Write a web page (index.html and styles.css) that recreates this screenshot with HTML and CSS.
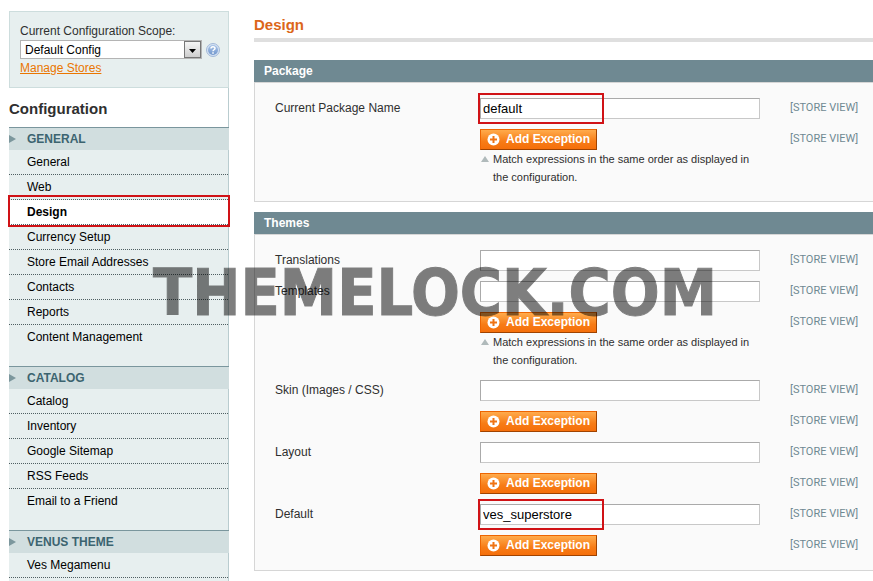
FILE: index.html
```html
<!DOCTYPE html>
<html lang="en">
<head>
<meta charset="utf-8">
<title>Configuration - Design</title>
<link rel="stylesheet" href="styles.css">
</head>
<body>
<svg class="defs" aria-hidden="true">
  <symbol id="plus" viewBox="0 0 13 13">
    <circle cx="6.5" cy="6.5" r="6" fill="#fff"/>
    <path d="M6.5 3v7M3 6.500h7" stroke="#ef7414" stroke-width="2"/>
  </symbol>
</svg>
<div class="page">
  <aside class="sidebar">
    <div class="scope-box">
      <label for="scope">Current Configuration Scope:</label>
      <div class="scope-row">
        <span class="select-wrap">
          <select id="scope"><option>Default Config</option></select>
          <svg class="select-arrow" viewBox="0 0 17 17" aria-hidden="true">
            <defs><linearGradient id="arrow-bg" x2="0" y2="1"><stop stop-color="#f6f6f6"/><stop offset="1" stop-color="#cdcdcd"/></linearGradient></defs>
            <rect x=".5" y=".5" width="16" height="16" fill="url(#arrow-bg)" stroke="#777"/>
            <path d="M5 8h7l-3.500 4z" fill="#000"/>
          </svg>
        </span>
        <svg class="help" viewBox="0 0 14 14" role="img" aria-label="Help">
          <defs><linearGradient id="help-bg" x2="0" y2="1"><stop stop-color="#a9c4e8"/><stop offset="1" stop-color="#7398cd"/></linearGradient></defs>
          <circle cx="7" cy="7" r="6.500" fill="#d5e2f2" stroke="#a3b9d8"/>
          <circle cx="7" cy="7" r="5" fill="url(#help-bg)"/>
          <path d="M5 5.600C5 3.200 9 3.200 9 5.400C9 6.800 7 6.700 7 8.300M7 9.300v1.500" fill="none" stroke="#fff" stroke-width="1.500"/>
        </svg>
      </div>
      <a href="#">Manage Stores</a>
    </div>
    <h2>Configuration</h2>
    <nav>
      <section>
        <h3>GENERAL</h3>
        <ul>
          <li><a href="#">General</a></li>
          <li><a href="#">Web</a></li>
          <li class="active"><a href="#">Design</a></li>
          <li><a href="#">Currency Setup</a></li>
          <li><a href="#">Store Email Addresses</a></li>
          <li><a href="#">Contacts</a></li>
          <li><a href="#">Reports</a></li>
          <li><a href="#">Content Management</a></li>
        </ul>
      </section>
      <section>
        <h3>CATALOG</h3>
        <ul>
          <li><a href="#">Catalog</a></li>
          <li><a href="#">Inventory</a></li>
          <li><a href="#">Google Sitemap</a></li>
          <li><a href="#">RSS Feeds</a></li>
          <li><a href="#">Email to a Friend</a></li>
        </ul>
      </section>
      <section class="cut">
        <h3>VENUS THEME</h3>
        <ul>
          <li><a href="#">Ves Megamenu</a></li>
        </ul>
      </section>
    </nav>
  </aside>
  <main>
    <h1>Design</h1>
    <section class="panel">
      <h2>Package</h2>
      <div class="fields">
        <div class="row">
          <label for="package">Current Package Name</label>
          <div class="control marked"><input id="package" type="text" value="default"></div>
          <span class="level">[STORE VIEW]</span>
        </div>
        <div class="row">
          <div class="control">
            <button type="button"><svg aria-hidden="true"><use href="#plus"/></svg>Add Exception</button>
            <p class="hint">Match expressions in the same order as displayed in the configuration.</p>
          </div>
          <span class="level">[STORE VIEW]</span>
        </div>
      </div>
    </section>
    <section class="panel">
      <h2>Themes</h2>
      <div class="fields">
        <div class="row">
          <label for="translations">Translations</label>
          <div class="control"><input id="translations" type="text"></div>
          <span class="level">[STORE VIEW]</span>
        </div>
        <div class="row">
          <label for="templates">Templates</label>
          <div class="control"><input id="templates" type="text"></div>
          <span class="level">[STORE VIEW]</span>
        </div>
        <div class="row">
          <div class="control">
            <button type="button"><svg aria-hidden="true"><use href="#plus"/></svg>Add Exception</button>
            <p class="hint">Match expressions in the same order as displayed in the configuration.</p>
          </div>
          <span class="level">[STORE VIEW]</span>
        </div>
        <div class="row">
          <label for="skin">Skin (Images / CSS)</label>
          <div class="control"><input id="skin" type="text"></div>
          <span class="level">[STORE VIEW]</span>
        </div>
        <div class="row">
          <div class="control"><button type="button"><svg aria-hidden="true"><use href="#plus"/></svg>Add Exception</button></div>
          <span class="level">[STORE VIEW]</span>
        </div>
        <div class="row">
          <label for="layout">Layout</label>
          <div class="control"><input id="layout" type="text"></div>
          <span class="level">[STORE VIEW]</span>
        </div>
        <div class="row">
          <div class="control"><button type="button"><svg aria-hidden="true"><use href="#plus"/></svg>Add Exception</button></div>
          <span class="level">[STORE VIEW]</span>
        </div>
        <div class="row">
          <label for="default">Default</label>
          <div class="control marked"><input id="default" type="text" value="ves_superstore"></div>
          <span class="level">[STORE VIEW]</span>
        </div>
        <div class="row">
          <div class="control"><button type="button"><svg aria-hidden="true"><use href="#plus"/></svg>Add Exception</button></div>
          <span class="level">[STORE VIEW]</span>
        </div>
      </div>
    </section>
  </main>
  <div class="watermark">THEMELOCK.COM</div>
</div>
</body>
</html>
```
FILE: styles.css
```css
*,
*::before,
*::after {
  box-sizing: border-box;
}

body {
  margin: 0;
  background: #fff;
  color: #2f2f2f;
  font: 12px/16px "Liberation Sans", Arial, sans-serif;
}

h1, h2, h3, p, ul {
  margin: 0;
  padding: 0;
}

ul {
  list-style: none;
}

.defs {
  display: none;
}

.page {
  position: relative;
  display: flex;
  gap: 25px;
  padding: 11px 0 0 9px;
}

.sidebar {
  flex: 0 0 220px;
  border-right: 1px solid #b9cccf;
}

.scope-box {
  margin-right: -1px;
  padding: 11px 8px 11px 10px;
  border: 1px solid #cddddd;
  background: #e7efef;
}

.scope-box label {
  display: block;
}

.scope-row {
  display: flex;
  align-items: center;
  gap: 4px;
  margin: 1px 0;
}

.select-wrap {
  position: relative;
  flex: 0 0 182px;
  height: 19px;
}

select {
  appearance: none;
  display: block;
  width: 100%;
  height: 19px;
  margin: 0;
  padding: 0 20px 0 4px;
  border: 1px solid #b4b4b4;
  border-radius: 0;
  background: #fff;
  color: #000;
  font: inherit;
}

.select-arrow {
  position: absolute;
  top: 1px;
  right: 1px;
  width: 17px;
  height: 17px;
  pointer-events: none;
}

.help {
  width: 14px;
  height: 14px;
}

.scope-box a {
  display: block;
  color: #ea7601;
}

.sidebar h2 {
  padding: 12px 0 9px;
  font-size: 15px;
  line-height: 18px;
}

.sidebar section {
  padding-bottom: 16px;
  background: #e7efef;
}

.sidebar section.cut {
  padding-bottom: 3px;
}

.sidebar h3 {
  display: flex;
  align-items: center;
  gap: 11px;
  margin-right: -1px;
  border-top: 1px solid #7a969d;
  background: #d1dedf;
  color: #3c6470;
  font-size: 12px;
  line-height: 22px;
}

.sidebar h3::before {
  content: "";
  border: solid transparent;
  border-width: 4px 0 4px 7px;
  border-left-color: #7c979d;
}

.sidebar li {
  position: relative;
  border-bottom: 1px dotted #4f5f62;
}

.sidebar li:last-child:not(:first-child) {
  border-bottom-color: transparent;
}

.sidebar li a {
  display: block;
  padding-left: 18px;
  color: #000;
  line-height: 24px;
  text-decoration: none;
}

.sidebar .active {
  background: #fff;
  font-weight: bold;
}

.sidebar .active::after {
  content: "";
  position: absolute;
  inset: -5px -2px -3px -1px;
  border: 2px solid #d01216;
}

main {
  flex: 1;
  min-width: 0;
  padding-top: 4px;
}

h1 {
  margin-bottom: 18px;
  padding-bottom: 3px;
  border-bottom: 4px solid #dfdfdf;
  color: #dc6619;
  font-size: 15px;
  line-height: 20px;
}

.panel + .panel {
  margin-top: 10px;
}

.panel h2 {
  padding-left: 10px;
  background: #6f8992;
  color: #fff;
  font-size: 12px;
  line-height: 22px;
}

.fields {
  padding: 15px 0 4px 20px;
  border: 1px solid #d6d6d6;
  border-right: 0;
  background: #fafafa;
}

.row {
  display: grid;
  grid-template-columns: 205px 280px 1fr;
  padding-bottom: 10px;
}

.row label {
  line-height: 20px;
}

.control {
  position: relative;
  grid-column: 2;
}

.control input {
  display: block;
  width: 100%;
  height: 21px;
  margin: 0;
  padding: 0 2px;
  border: 1px solid;
  border-color: #aaa #c8c8c8 #c8c8c8 #aaa;
  background: #fff;
  color: #000;
  font: inherit;
  font-size: 13px;
}

.marked::after {
  content: "";
  position: absolute;
  top: -5px;
  left: -2px;
  width: 126px;
  height: 31px;
  border: 2px solid #d01216;
  pointer-events: none;
}

.control button {
  display: flex;
  align-items: center;
  gap: 6px;
  height: 21px;
  margin: 0;
  padding: 0 6px;
  border: 1px solid;
  border-color: #ed6502 #a04300 #a04300 #ed6502;
  background: linear-gradient(#ffab4c, #f77c16 60%, #f56f0b);
  color: #fff;
  font: bold 12px/19px "Liberation Sans", Arial, sans-serif;
}

.control button svg {
  width: 13px;
  height: 13px;
}

.hint {
  position: relative;
  padding: 0 0 1px 13px;
  font-size: 11px;
  line-height: 18px;
}

.hint::before {
  content: "";
  position: absolute;
  top: 6px;
  left: 1px;
  border: solid transparent;
  border-width: 0 4px 6px;
  border-bottom-color: #b0babb;
}

.level {
  grid-column: 3;
  padding-left: 30px;
  color: #6f8992;
  font: 11px/20px Roboto, "Liberation Sans", sans-serif;
}

.watermark {
  position: absolute;
  top: 256px;
  left: 153px;
  color: #000;
  font: bold 64px/75px "DejaVu Sans Condensed", "DejaVu Sans", sans-serif;
  -webkit-text-stroke: 1px #000;
  opacity: 0.5;
  pointer-events: none;
}
```
